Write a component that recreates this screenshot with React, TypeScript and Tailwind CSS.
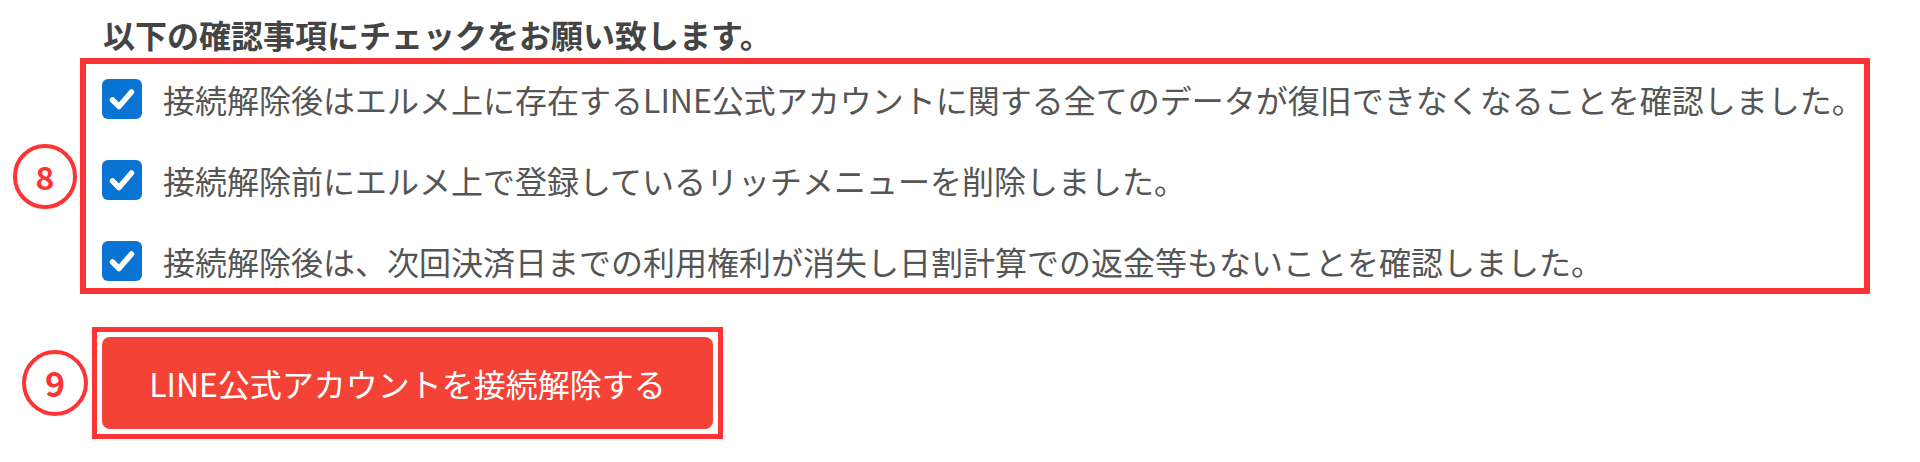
import { type ReactNode } from 'react'

const items = [
  '接続解除後はエルメ上に存在するLINE公式アカウントに関する全てのデータが復旧できなくなることを確認しました。',
  '接続解除前にエルメ上で登録しているリッチメニューを削除しました。',
  '接続解除後は、次回決済日までの利用権利が消失し日割計算での返金等もないことを確認しました。',
]

function CheckMark() {
  return (
    <span className="flex h-[40px] w-[40px] shrink-0 items-center justify-center rounded-[6px] bg-[#0a74d4]">
      <svg width="40" height="40" viewBox="0 0 40 40" fill="none">
        <path
          d="M10.5 21 L17 27.5 L29.5 13"
          stroke="white"
          strokeWidth="5.5"
          strokeLinecap="round"
          strokeLinejoin="round"
        />
      </svg>
    </span>
  )
}

function StepBadge({ children, className }: { children: ReactNode; className: string }) {
  return (
    <div
      className={`flex shrink-0 items-center justify-center rounded-full border-[4px] border-[#fe3334] font-bold text-[#fe3334] ${className}`}
    >
      {children}
    </div>
  )
}

export default function App() {
  return (
    <div className="h-[462px] w-[1920px] bg-white pt-[14px] font-['Noto_Sans_CJK_JP','Noto_Sans',sans-serif]">
      <h2 className="ml-[103px] text-[32px] leading-[40px] font-bold text-[#444]">
        以下の確認事項にチェックをお願い致します。
      </h2>

      <div className="mt-[4px] flex items-center">
        <StepBadge className="ml-[13px] h-[65px] w-[64px] text-[32px] leading-none">8</StepBadge>
        <div className="ml-[3px] w-[1790px] border-[6px] border-[#fe3334] pt-[8px] pl-[16px]">
          <div className="flex flex-col gap-[27px]">
            {items.map((text) => (
              <label key={text} className="flex h-[54px] items-center gap-[21px]">
                <CheckMark />
                <span className="text-[32px] leading-[40px] whitespace-nowrap text-[#555]">{text}</span>
              </label>
            ))}
          </div>
        </div>
      </div>

      <div className="mt-[33px] flex items-center">
        <StepBadge className="ml-[22px] h-[66px] w-[66px] text-[34px] leading-none">9</StepBadge>
        <div className="ml-[4px] border-[5px] border-[#fe3334] p-[5px]">
          <button className="flex h-[92px] w-[611px] items-center justify-center rounded-[8px] bg-[#f44336] text-[32px] text-white">
            LINE公式アカウントを接続解除する
          </button>
        </div>
      </div>
    </div>
  )
}
